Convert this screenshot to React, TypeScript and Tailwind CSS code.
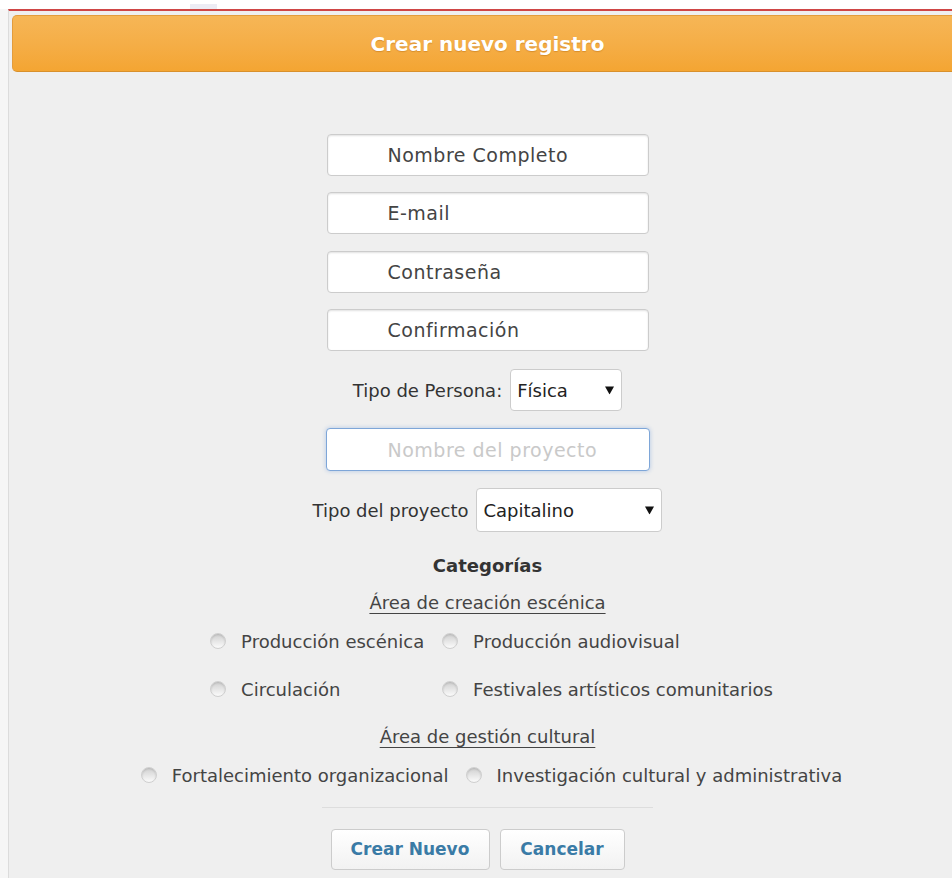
import React from 'react'

const font = { fontFamily: '"DejaVu Sans", "Noto Sans", sans-serif' }

const fieldCls =
  'h-[42px] w-[322px] rounded-[4px] border border-[#cccccc] bg-white pl-[60px] text-[19px] tracking-[0.5px] text-[#444] shadow-[inset_0_1px_2px_rgba(0,0,0,0.12)] outline-none placeholder:text-[#444]'

const Arrow: React.FC = () => (
  <svg className="pointer-events-none absolute right-[8px] top-1/2 -translate-y-1/2" width="9" height="9" viewBox="0 0 9 9">
    <polygon points="0,1 9,1 4.5,9" fill="#111" />
  </svg>
)

interface RadioProps {
  label: string
  name: string
}

const Radio: React.FC<RadioProps> = ({ label, name }) => (
  <label className="flex h-[24px] items-center gap-[15px] text-[18px] text-[#444]">
    <input
      type="radio"
      name={name}
      className="h-[16px] w-[16px] shrink-0 appearance-none rounded-full border border-[#cfcfcf] bg-linear-to-b from-[#d0d0d0] to-[#fbfbfb] shadow-[inset_0_1px_2px_rgba(0,0,0,0.14)]"
    />
    <span className="whitespace-nowrap">{label}</span>
  </label>
)

const App: React.FC = () => {
  return (
    <div className="h-screen w-full overflow-hidden bg-[#f6f6f6]" style={font}>
      {/* top strip */}
      <div className="h-[9px] w-full bg-white pt-[4px]">
        <div className="ml-[190px] h-[5px] w-[27px] bg-[#ececf4]" />
      </div>

      <div className="ml-[8px] h-[900px] w-[958px] border-l border-t-2 border-l-[#dcdcdc] border-t-[#cf4646] bg-[#efefef] pl-[3px] pr-[3px] pt-[4px]">
        <div className="flex h-[57px] items-center justify-center rounded-[5px] border border-[#e39c3c] border-b-[#d8902c] bg-linear-to-b from-[#f6b656] via-[#f5ae47] to-[#f4a532]">
          <h2 className="text-[20px] font-bold text-white [text-shadow:0_1px_1px_rgba(160,90,0,0.35)]">
            Crear nuevo registro
          </h2>
        </div>

        <form className="flex flex-col items-center" onSubmit={(e) => e.preventDefault()}>
          <input className={`${fieldCls} mt-[62px]`} placeholder="Nombre Completo" />
          <input className={`${fieldCls} mt-[16px]`} placeholder="E-mail" />
          <input className={`${fieldCls} mt-[17px]`} type="password" placeholder="Contraseña" />
          <input className={`${fieldCls} mt-[16px]`} type="password" placeholder="Confirmación" />

          <div className="mt-[18px] flex items-center gap-[8px] text-[18px] text-[#333]">
            <span>Tipo de Persona:</span>
            <div className="relative">
              <select className="h-[42px] w-[112px] appearance-none rounded-[4px] border border-[#cccccc] bg-white pl-[6px] text-[18px] text-[#222] outline-none">
                <option>Física</option>
                <option>Moral</option>
              </select>
              <Arrow />
            </div>
          </div>

          <input
            className="mt-[17px] h-[43px] w-[324px] rounded-[4px] border border-[#7ea6d8] bg-white pl-[61px] text-[19px] tracking-[0.5px] text-[#444] shadow-[0_0_4px_rgba(102,150,220,0.45)] outline-none placeholder:text-[#c9c9c9]"
            placeholder="Nombre del proyecto"
          />

          <div className="mt-[17px] flex items-center gap-[8px] text-[18px] text-[#333]">
            <span>Tipo del proyecto</span>
            <div className="relative">
              <select className="h-[44px] w-[186px] appearance-none rounded-[4px] border border-[#cccccc] bg-white pl-[6px] text-[18px] text-[#222] outline-none">
                <option>Capitalino</option>
                <option>Foráneo</option>
              </select>
              <Arrow />
            </div>
          </div>

          <h3 className="mt-[22px] text-[18px] font-bold leading-[24px] text-[#333]">Categorías</h3>
          <p className="mt-[13px] text-[18px] leading-[24px] text-[#444] underline underline-offset-[4px]">
            Área de creación escénica
          </p>

          <div className="mt-[14px] ml-[8px] grid grid-cols-[232px_auto] gap-y-[24px]">
            <Radio name="cat" label="Producción escénica" />
            <Radio name="cat" label="Producción audiovisual" />
            <Radio name="cat" label="Circulación" />
            <Radio name="cat" label="Festivales artísticos comunitarios" />
          </div>

          <p className="mt-[24px] text-[18px] leading-[24px] text-[#444] underline underline-offset-[4px]">
            Área de gestión cultural
          </p>

          <div className="mt-[14px] ml-[8px] flex items-center gap-[17px]">
            <Radio name="cat" label="Fortalecimiento organizacional" />
            <Radio name="cat" label="Investigación cultural y administrativa" />
          </div>

          <div className="mt-[20px] h-px w-[331px] bg-[#dddddd]" />

          <div className="mr-[20px] mt-[21px] flex gap-[10px]">
            <button
              type="submit"
              className="h-[41px] w-[159px] rounded-[4px] border border-[#cccccc] bg-linear-to-b from-white to-[#f2f2f2] text-[17px] font-bold text-[#3a7ba6]"
            >
              Crear Nuevo
            </button>
            <button
              type="button"
              className="h-[41px] w-[125px] rounded-[4px] border border-[#cccccc] bg-linear-to-b from-white to-[#f2f2f2] text-[17px] font-bold text-[#3a7ba6]"
            >
              Cancelar
            </button>
          </div>
        </form>
      </div>
    </div>
  )
}

export default App
